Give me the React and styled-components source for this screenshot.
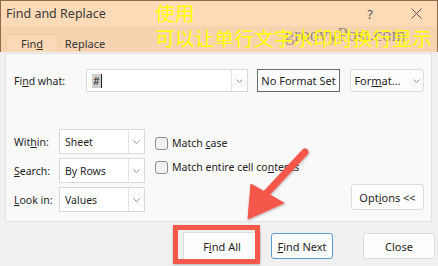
import React from "react";
import styled, { createGlobalStyle } from "styled-components";

const GlobalStyle = createGlobalStyle`
  html, body {
    margin: 0;
    padding: 0;
    overflow: hidden;
    background: #f0f0f0;
  }
  * { box-sizing: border-box; }
`;

const Window = styled.div`
  position: relative;
  width: 438px;
  height: 266px;
  background: #f0f0f0;
  font-family: "Noto Sans", "Open Sans", sans-serif;
  font-size: 10.5px;
  color: #1f1f1f;
  display: flex;
  flex-direction: column;
  overflow: hidden;
`;

const Header = styled.div`
  border: 1px solid #8d6c4c;
  border-bottom: none;
  display: flex;
  flex-direction: column;
`;

const TitleBar = styled.div`
  height: 25px;
  background: #fedab7;
  display: flex;
  align-items: center;
  padding: 0 8px 0 5px;
  font-size: 12.5px;
  color: #3a3a3a;
`;

const TitleText = styled.span`
  flex: 1;
`;

const TitleIcon = styled.span`
  width: ${({ $w }) => $w}px;
  margin-right: ${({ $mr }) => $mr || 0}px;
  display: flex;
  justify-content: center;
  color: #555;
  font-size: 13px;
`;

const TabStrip = styled.div`
  height: 26px;
  background: #f8d3b0;
  display: flex;
  align-items: flex-end;
  padding-left: 5px;
  gap: 2px;
`;

const Tab = styled.div`
  width: ${({ $w }) => $w}px;
  height: 18px;
  display: flex;
  align-items: center;
  justify-content: center;
  font-size: 11px;
  color: #333;
  background: ${({ $active }) => ($active ? "#fbd8b6" : "#f8d4b2")};
  border: 1px solid ${({ $active }) => ($active ? "#f1cca9" : "#f4cfad")};
  border-bottom: none;
`;

const Body = styled.div`
  flex: 1;
  display: flex;
  flex-direction: column;
  padding: 1px 6px 0 5px;
`;

const Panel = styled.div`
  height: 169px;
  background: #f9f9f9;
  border: 1px solid #e2e2e2;
  padding: 15px 6px 0 8px;
  display: flex;
  flex-direction: column;
`;

const Row = styled.div`
  display: flex;
  align-items: center;
`;

const Label = styled.span`
  width: ${({ $w }) => $w}px;
  flex-shrink: 0;
`;

const U = styled.span`
  text-decoration: underline;
  text-underline-offset: 1px;
`;

const Combo = styled.div`
  width: ${({ $w }) => $w}px;
  height: ${({ $h }) => $h}px;
  background: #fff;
  border: 1px solid #dadada;
  display: flex;
  align-items: stretch;
  flex-shrink: 0;
`;

const ComboValue = styled.div`
  flex: 1;
  display: flex;
  align-items: center;
  padding-left: 5px;
`;

const Selected = styled.span`
  background: #cfcfcf;
  padding: 0 1px;
  border-right: 1px solid #222;
`;

const ComboArrow = styled.div`
  width: 16px;
  border-left: 1px solid #e4e4e4;
  display: flex;
  align-items: center;
  justify-content: center;
`;

const Chevron = () => (
  <svg width="7" height="4" viewBox="0 0 7 4">
    <path d="M0.5 0.5 L3.5 3.5 L6.5 0.5" fill="none" stroke="#8a8a8a" strokeWidth="0.9" />
  </svg>
);

const CloseGlyph = () => (
  <svg width="11" height="11" viewBox="0 0 11 11">
    <path d="M0.5 0.5 L10.5 10.5 M10.5 0.5 L0.5 10.5" stroke="#555" strokeWidth="1" />
  </svg>
);

const Button = styled.div`
  width: ${({ $w }) => $w}px;
  height: ${({ $h }) => $h || 24}px;
  margin-left: ${({ $ml }) => $ml || 0}px;
  background: #fdfdfd;
  border: 1px solid ${({ $border }) => $border || "#dcdcdc"};
  border-radius: ${({ $radius }) => ($radius ? 3 : 0)}px;
  display: flex;
  align-items: center;
  justify-content: center;
  gap: 12px;
  flex-shrink: 0;
  font-size: 11px;
  color: #1f1f1f;
`;

const OptionsArea = styled.div`
  margin-top: 37px;
  display: flex;
  align-items: flex-start;
`;

const SelectColumn = styled.div`
  display: flex;
  flex-direction: column;
  gap: 4px;
`;

const CheckColumn = styled.div`
  margin-left: 10px;
  margin-top: 7px;
  display: flex;
  flex-direction: column;
  gap: 10px;
  white-space: nowrap;
`;

const CheckRow = styled.div`
  display: flex;
  align-items: center;
  gap: 4px;
  height: 14px;
`;

const Box = styled.span`
  width: 13px;
  height: 13px;
  border: 1px solid #8e8e8e;
  border-radius: 3px;
  background: #f1f1f1;
`;

const OptionsButton = styled(Button)`
  margin-left: auto;
  margin-top: 55px;
  margin-right: 1px;
`;

const Footer = styled.div`
  margin-top: 10px;
  display: flex;
  padding-left: 174px;
  align-items: center;
`;

const Overlay = styled.div`
  position: absolute;
  pointer-events: none;
`;

const Watermark = styled(Overlay)`
  left: 285px;
  top: 25px;
  font-family: "Liberation Serif", "DejaVu Serif", serif;
  font-size: 18.5px;
  line-height: 21px;
  color: rgba(90, 90, 90, 0.6);
`;

const YellowText = styled(Overlay)`
  left: 155px;
  top: 0px;
  font-family: "Noto Sans CJK SC", sans-serif;
  font-size: 19.8px;
  line-height: 25px;
  color: #ffff00;
  white-space: nowrap;
`;

const RedBox = styled(Overlay)`
  left: 173px;
  top: 225px;
  width: 87px;
  height: 39px;
  border: 5px solid #f4584b;
  box-shadow: 0 1px 2px rgba(0, 0, 0, 0.25);
`;

const Arrow = () => (
  <Overlay style={{ left: 0, top: 0 }}>
    <svg width="438" height="266" viewBox="0 0 438 266">
      <defs>
        <filter id="sh" x="-20%" y="-20%" width="140%" height="140%">
          <feDropShadow dx="0.5" dy="1" stdDeviation="1" floodColor="#000" floodOpacity="0.3" />
        </filter>
      </defs>
      <g filter="url(#sh)" fill="#f4584b" stroke="#f4584b">
        <line x1="305" y1="152" x2="263" y2="197" strokeWidth="7" strokeLinecap="round" />
        <polygon points="248,219 251,184 284,203" strokeWidth="1" strokeLinejoin="round" />
      </g>
    </svg>
  </Overlay>
);

export default function App() {
  return (
    <>
      <GlobalStyle />
      <Window>
        <Header>
          <TitleBar>
            <TitleText>Find and Replace</TitleText>
            <TitleIcon $w={20} $mr={23}>?</TitleIcon>
            <TitleIcon $w={26}>
              <CloseGlyph />
            </TitleIcon>
          </TitleBar>
          <TabStrip>
            <Tab $w={52} $active>
              <span>
                Fin<U>d</U>
              </span>
            </Tab>
            <Tab $w={50}>Replace</Tab>
          </TabStrip>
        </Header>
        <Body>
          <Panel>
            <Row>
              <Label $w={72}>
                Fi<U>n</U>d what:
              </Label>
              <Combo $w={162} $h={23}>
                <ComboValue>
                  <Selected>#</Selected>
                </ComboValue>
                <ComboArrow>
                  <Chevron />
                </ComboArrow>
              </Combo>
              <Button $w={83} $h={23} $ml={9} $border="#6b6b6b">
                No Format Set
              </Button>
              <Button $w={74} $h={23} $ml={10} $radius>
                <span>
                  For<U>m</U>at...
                </span>
                <Chevron />
              </Button>
            </Row>
            <OptionsArea>
              <SelectColumn>
                <Row>
                  <Label $w={45}>
                    Wit<U>h</U>in:
                  </Label>
                  <Combo $w={86} $h={25}>
                    <ComboValue>Sheet</ComboValue>
                    <ComboArrow>
                      <Chevron />
                    </ComboArrow>
                  </Combo>
                </Row>
                <Row>
                  <Label $w={45}>
                    <U>S</U>earch:
                  </Label>
                  <Combo $w={86} $h={25}>
                    <ComboValue>By Rows</ComboValue>
                    <ComboArrow>
                      <Chevron />
                    </ComboArrow>
                  </Combo>
                </Row>
                <Row>
                  <Label $w={45}>
                    <U>L</U>ook in:
                  </Label>
                  <Combo $w={86} $h={25}>
                    <ComboValue>Values</ComboValue>
                    <ComboArrow>
                      <Chevron />
                    </ComboArrow>
                  </Combo>
                </Row>
              </SelectColumn>
              <CheckColumn>
                <CheckRow>
                  <Box />
                  <span>
                    Match <U>c</U>ase
                  </span>
                </CheckRow>
                <CheckRow>
                  <Box />
                  <span>
                    Match entire cell co<U>n</U>tents
                  </span>
                </CheckRow>
              </CheckColumn>
              <OptionsButton $w={73} $h={26} $radius>
                <span>
                  Opt<U>i</U>ons &lt;&lt;
                </span>
              </OptionsButton>
            </OptionsArea>
          </Panel>
          <Footer>
            <Button $w={78} $h={28} $ml={4}>
              <span>
                F<U>i</U>nd All
              </span>
            </Button>
            <Button $w={62} $h={26} $ml={10} $border="#5b9bd5" $radius>
              <span>
                <U>F</U>ind Next
              </span>
            </Button>
            <Button $w={72} $h={26} $ml={30} $radius>
              Close
            </Button>
          </Footer>
        </Body>
        <Watermark>groovyPost.com</Watermark>
        <YellowText>
          使用
          <br />
          可以让单行文字水印时换行显示
        </YellowText>
        <Arrow />
        <RedBox />
      </Window>
    </>
  );
}
